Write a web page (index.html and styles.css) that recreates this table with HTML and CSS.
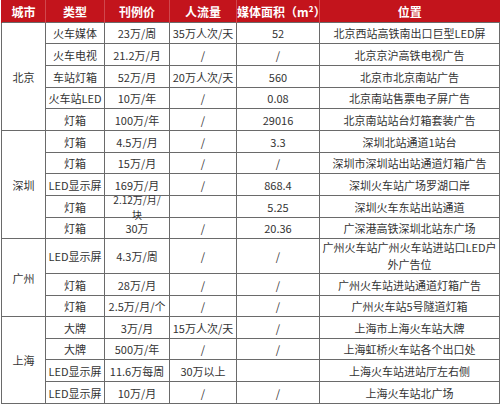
FILE: index.html
```html
<!DOCTYPE html>
<html lang="zh">
<head>
<meta charset="utf-8">
<title>火车站广告媒体刊例</title>
<link rel="stylesheet" href="styles.css">
</head>
<body>
<div class="wrap">
<table class="media">
  <colgroup>
    <col class="c-city"><col class="c-type"><col class="c-price"><col class="c-flow"><col class="c-area"><col class="c-loc">
  </colgroup>
  <thead>
    <tr><th>城市</th><th>类型</th><th>刊例价</th><th>人流量</th><th>媒体面积（m²）</th><th>位置</th></tr>
  </thead>
  <tbody>
    <tr class="r21"><td rowspan="5" class="city">北京</td><td>火车媒体</td><td>23万/周</td><td>35万人次/天</td><td>52</td><td>北京西站高铁南出口巨型LED屏</td></tr>
    <tr><td>火车电视</td><td>21.2万/月</td><td>/</td><td>/</td><td>北京京沪高铁电视广告</td></tr>
    <tr><td>车站灯箱</td><td>52万/月</td><td>20万人次/天</td><td>560</td><td>北京市北京南站广告</td></tr>
    <tr class="r21"><td>火车站LED</td><td>10万/年</td><td>/</td><td>0.08</td><td>北京南站售票电子屏广告</td></tr>
    <tr><td>灯箱</td><td>100万/年</td><td>/</td><td>29016</td><td>北京南站站台灯箱套装广告</td></tr>

    <tr><td rowspan="5" class="city">深圳</td><td>灯箱</td><td>4.5万/月</td><td>/</td><td>3.3</td><td>深圳北站通道1站台</td></tr>
    <tr class="r21"><td>灯箱</td><td>15万/月</td><td>/</td><td>/</td><td>深圳市深圳站出站通道灯箱广告</td></tr>
    <tr><td>LED显示屏</td><td>169万/月</td><td>/</td><td>868.4</td><td>深圳火车站广场罗湖口岸</td></tr>
    <tr><td>灯箱</td><td><div class="over">2.12万/月/<br>块</div></td><td></td><td>5.25</td><td>深圳火车东站出站通道</td></tr>
    <tr class="r21"><td>灯箱</td><td>30万</td><td>/</td><td>20.36</td><td>广深港高铁深圳北站东广场</td></tr>

    <tr class="tall"><td rowspan="3" class="city">广州</td><td>LED显示屏</td><td>4.3万/周</td><td>/</td><td>/</td><td class="two">广州火车站广州火车站进站口LED户<br>外广告位</td></tr>
    <tr><td>灯箱</td><td>28万/月</td><td>/</td><td>/</td><td>广州火车站进站通道灯箱广告</td></tr>
    <tr class="r21"><td>灯箱</td><td>2.5万/月/个</td><td>/</td><td>/</td><td>广州火车站5号隧道灯箱</td></tr>

    <tr><td rowspan="4" class="city">上海</td><td>大牌</td><td>3万/月</td><td>15万人次/天</td><td>/</td><td>上海市上海火车站大牌</td></tr>
    <tr class="r21"><td>大牌</td><td>500万/年</td><td>/</td><td>/</td><td>上海虹桥火车站各个出口处</td></tr>
    <tr><td>LED显示屏</td><td>11.6万每周</td><td>30万以上</td><td></td><td>上海火车站进站厅左右侧</td></tr>
    <tr><td>LED显示屏</td><td>10万/月</td><td>/</td><td>/</td><td>上海火车站北广场</td></tr>
  </tbody>
</table>
</div>
</body>
</html>
```

FILE: styles.css
```css
html, body {
  margin: 0;
  padding: 0;
  background: #ffffff;
}

.wrap {
  padding: 0 0 0 1px;
}

.media {
  border-collapse: collapse;
  table-layout: fixed;
  width: 498px;
  font-family: "Noto Sans CJK SC", "Microsoft YaHei", sans-serif;
  font-size: 11px;
  color: #333333;
}

.c-city { width: 44px; }
.c-type { width: 59px; }
.c-price { width: 65px; }
.c-flow { width: 67px; }
.c-area { width: 83px; }
.c-loc { width: 180px; }

.media th {
  background: #c3141c;
  color: #ffffff;
  font-weight: bold;
  font-size: 12px;
  height: 22px;
  padding: 0;
  text-align: center;
  border-left: 1px solid rgba(255, 255, 255, 0.22);
  white-space: nowrap;
}

.media th:first-child {
  border-left: 1px solid #c3141c;
}

.media td {
  border: 1px solid #6a6a6a;
  height: 21px;
  padding: 0;
  text-align: center;
  vertical-align: middle;
  white-space: nowrap;
  line-height: 14px;
  overflow: visible;
}

.media tr.r21 td {
  height: 20px;
}

.media tr.tall td {
  height: 32px;
}

.media td.two {
  line-height: 17px;
}

.over {
  font-size: 10px;
  line-height: 15px;
  height: 21px;
  display: flex;
  flex-direction: column;
  justify-content: center;
  overflow: visible;
}
```
